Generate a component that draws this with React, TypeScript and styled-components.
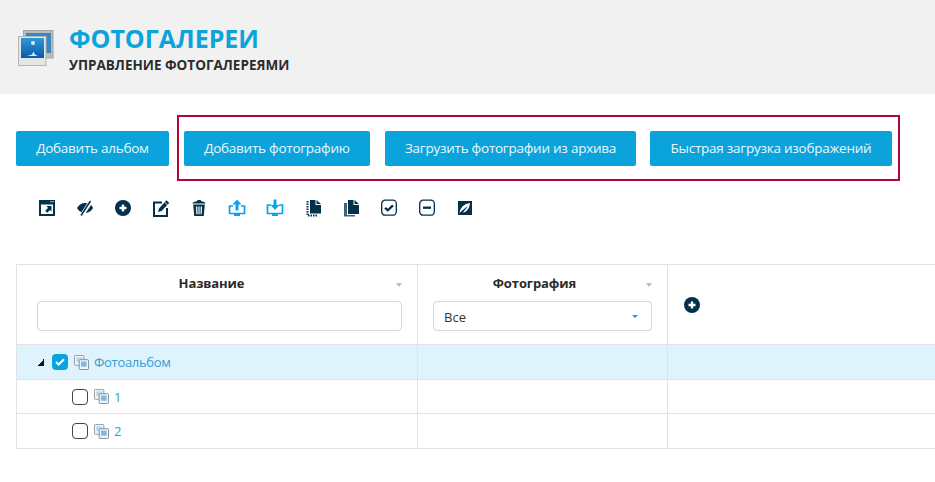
import React from "react";
import styled, { createGlobalStyle } from "styled-components";

const Global = createGlobalStyle`
  html, body { margin: 0; padding: 0; background: #fff; overflow: hidden; }
  body { font-family: "Open Sans", "Noto Sans", sans-serif; color: #333; }
  * { box-sizing: border-box; }
`;

const Page = styled.div`width: 935px; height: 482px; overflow: hidden; display: flex; flex-direction: column;`;
const Header = styled.header`height: 94px; background: #f1f1f1; display: flex; align-items: flex-start; padding: 23px 0 0 18px; gap: 15px;`;
const HeaderIcon = styled.svg`width: 36px; height: 36px; margin-top: 7px; flex: none;`;
const Titles = styled.div`display: flex; flex-direction: column;`;
const Title = styled.h1`margin: 0; font-size: 25px; line-height: 30px; font-weight: 700; color: #0ba3dc;`;
const Subtitle = styled.h2`margin: 2px 0 0; font-size: 13.5px; line-height: 20px; font-weight: 700; color: #2b2b2b;`;

const ActionRow = styled.div`display: flex; align-items: center; margin: 21px 0 0 16px;`;
const ActionBtn = styled.button<{ $w: number; $tight?: boolean }>`
  height: 35px; background: #0ba3dc; color: #eaf8fe; border: none; border-radius: 2px;
  font: 400 13.5px "Open Sans", sans-serif; letter-spacing: -0.25px; padding: 0; flex: none;
  width: ${p => p.$w}px; margin-left: ${p => (p.$tight ? "-1px" : "0")};
`;
const Framed = styled.div`
  display: flex; align-items: center; margin-left: 8px; width: 723px; height: 66px;
  border: 2px solid #b0063a; padding-left: 5px; gap: 15px;
`;

const Toolbar = styled.div`display: flex; margin: 18px 0 0 38px; height: 18px;`;
const ToolIcon = styled.svg<{ $blue?: boolean }>`width: 18px; height: 18px; flex: none; margin-right: 20px; color: ${p => (p.$blue ? "#0ba3ee" : "#03304a")};`;

const Table = styled.div`
  margin: 47px 0 0 16px; width: 1000px; display: grid;
  grid-template-columns: 401px 250px 1fr;
  border-top: 1px solid #e2e2e2; border-left: 1px solid #e2e2e2;
`;
const HeadCell = styled.div`
  height: 79px; border-right: 1px solid #e2e2e2; padding: 9px 15px 0 20px; position: relative;
  display: flex; flex-direction: column; align-items: stretch; gap: 9px;
`;
const HeadLabel = styled.div<{ $shift: number }>`font-size: 13px; line-height: 18px; font-weight: 700; color: #2b2b2b; text-align: center; padding-right: ${p => p.$shift}px; letter-spacing: -0.1px;`;
const SortMark = styled.span`
  position: absolute; right: 15px; top: 18px; width: 0; height: 0;
  border-left: 3px solid transparent; border-right: 3px solid transparent; border-top: 4px solid #bdbdbd;
`;
const FilterInput = styled.input`height: 30px; border: 1px solid #d6d6d6; border-radius: 4px; width: 365px; background: #fff; padding: 0;`;
const Select = styled.div`
  height: 30px; width: 219px; border: 1px solid #d6d6d6; border-radius: 4px; display: flex; align-items: center;
  justify-content: space-between; padding: 1px 13px 0 10px; font-size: 13px; color: #333; margin-left: -5px;
`;
const Caret = styled.span`width: 0; height: 0; border-left: 3px solid transparent; border-right: 3px solid transparent; border-top: 3px solid #0ba3ee;`;
const AddCell = styled.div`height: 79px; display: flex; align-items: center; padding-left: 16px; border-right: 1px solid #e2e2e2;`;
const AddIcon = styled.svg`width: 16px; height: 16px; color: #03304a;`;

const Cell = styled.div<{ $h: number; $active?: boolean; $indent?: number }>`
  height: ${p => p.$h}px; border-top: 1px solid #e2e2e2; border-right: 1px solid #e2e2e2;
  background: ${p => (p.$active ? "#dff3fc" : "#fff")}; display: flex; align-items: center;
  padding-left: ${p => p.$indent || 0}px;
`;
const Expander = styled.span`width: 7px; height: 7px; background: linear-gradient(135deg, transparent 50%, #111 50%); margin-right: 8px; margin-top: 1px;`;
const Check = styled.span<{ $on?: boolean }>`
  width: 16px; height: 16px; border-radius: 4px; flex: none; display: flex; align-items: center; justify-content: center;
  border: ${p => (p.$on ? "none" : "1.5px solid #3a4654")}; background: ${p => (p.$on ? "#0ba3dc" : "#fff")};
`;
const AlbumIcon = styled.svg`width: 15px; height: 15px; margin: 0 5px 0 6px; flex: none;`;
const NodeLink = styled.span`font-size: 13px; letter-spacing: -0.3px; color: #2f9fd8;`;
const Bottom = styled.div`border-top: 1px solid #e2e2e2; width: 1000px; margin-left: 16px;`;

const Plus = () => (
  <AddIcon viewBox="0 0 16 16">
    <circle cx="8" cy="8" r="8" fill="currentColor" />
    <path d="M8 4.500v7M4.500 8h7" stroke="#fff" strokeWidth="2.400" />
  </AddIcon>
);

const Album = () => (
  <AlbumIcon viewBox="0 0 16 16">
    <rect x="0.500" y="0.500" width="10" height="10.500" rx="1" fill="#f1f4f6" stroke="#8e9aa2" />
    <rect x="2.500" y="2.500" width="6" height="5" fill="#b3d8f2" />
    <rect x="5.500" y="5" width="10" height="10.500" rx="1" fill="#f1f4f6" stroke="#7f8b94" />
    <rect x="7.500" y="7" width="6" height="5.500" fill="#7db9e8" />
  </AlbumIcon>
);

const tools: { blue?: boolean; d: React.ReactNode }[] = [
  { d: <><path fillRule="evenodd" clipRule="evenodd" fill="currentColor" d="M1 1h16v16H1zM3 5.500V15h12V5.500z" /><path fill="#fff" d="M12.500 2.200h1.200v1h-1.200zM14.500 2.200h1.200v1h-1.200z" /><path fill="currentColor" d="M13.500 7v5.500L12 11l-2.800 2.800-2-2L10 9 8.500 7z" /></> },
  { d: <><path fill="currentColor" d="M1 9C3 5.500 6 4 9 4c1.300 0 2.500.3 3.500.8L6.800 13.500C4.300 13 2.300 11.500 1 9zM17 9c-1.500 3-4.200 4.700-7.300 5l5.300-8c.8.800 1.500 1.800 2 3z" /><path stroke="#fff" strokeWidth="3" d="M14.500 2L5 16.500" /><path stroke="currentColor" strokeWidth="1.500" d="M14.500 2L5 16.500" /></> },
  { d: <><circle cx="9" cy="9" r="8" fill="currentColor" /><path d="M9 5.500v7M5.500 9h7" stroke="#fff" strokeWidth="2.400" /></> },
  { d: <><path fill="none" stroke="currentColor" strokeWidth="2" d="M10 3.500H2v13.500h13V9" /><path fill="currentColor" d="M6 13l1-3.500L14.500 1.200 17.200 4 9.500 12z" /><path stroke="#fff" strokeWidth="1" d="M13 3.500l2.300 2.300" /></> },
  { d: <><path fill="currentColor" d="M2.500 4.500C2.500 3 5.500 2.400 7 2.200L7.600 1h3l.6 1.200C13 2.400 15.500 3 15.500 4.500z" /><path fill="currentColor" fillRule="evenodd" d="M3.200 5.500h11.600L13.800 17H4.200zM6 7.500l.3 7.800h1.200L7.300 7.500zm2.400 0v7.800h1.200V7.500zm2.300 0l-.2 7.800h1.200L12 7.500z" /></> },
  { blue: true, d: <><path fill="currentColor" d="M9 .5l4.500 5H10.500v6h-3v-6H4.500z" /><path fill="none" stroke="currentColor" strokeWidth="1.700" d="M5 7H1.500v7.500h15V7H13" /><path fill="currentColor" d="M6 14.500h6V17H6z" /></> },
  { blue: true, d: <><path fill="currentColor" d="M7.500 .5h3v5.500h3L9 11 4.500 6h3z" /><path fill="none" stroke="currentColor" strokeWidth="1.700" d="M5 6H1.500v8.500h15V6H13" /><path fill="currentColor" d="M6 14.500h6V17H6z" /></> },
  { d: <><path fill="currentColor" d="M6 1h5.500v5h5.500v8.500H6zM12.500 1L17 5h-4.500z" /><path stroke="currentColor" strokeWidth="2" strokeDasharray="1.500 1" d="M3.500 2v14.500H14" fill="none" /></> },
  { d: <><path fill="currentColor" d="M6 1h5.500v5h5.500v9H6zM12.500 1L17 5h-4.500z" /><path fill="currentColor" opacity=".75" d="M2 4h3v12h8v1.500H2z" /></> },
  { d: <><rect x="1.700" y="1.200" width="14.600" height="15" rx="3.500" fill="none" stroke="currentColor" strokeWidth="1.300" /><path fill="none" stroke="currentColor" strokeWidth="2.300" d="M5 8.800l2.800 2.500L13 6.300" /></> },
  { d: <><rect x="1.700" y="1.200" width="14.600" height="15" rx="3.500" fill="none" stroke="currentColor" strokeWidth="1.300" /><path stroke="currentColor" strokeWidth="2.300" d="M5 8.700h8" /></> },
  { d: <><rect x="2" y="2" width="14" height="14" fill="currentColor" /><path fill="#fff" d="M3.500 14C4 9 7.500 5 14 4c-.5 6-3.500 9-7 9.500L12 7c-3 2-5.500 4-8.500 7z" /></> },
];

export default function App() {
  return (
    <Page>
      <Global />
      <Header>
        <HeaderIcon viewBox="0 0 36 36">
          <defs>
            <linearGradient id="sea" x1="0" y1="0" x2="0" y2="1">
              <stop offset="0" stopColor="#2f97dc" />
              <stop offset="1" stopColor="#0a5aa6" />
            </linearGradient>
          </defs>
          <rect x="5.500" y="0.500" width="29.500" height="27.500" fill="#b9bbbc" stroke="#a2a4a5" />
          <rect x="8" y="3" width="25" height="20" fill="#3c86bf" />
          <rect x="0.500" y="6.500" width="27.500" height="29" fill="#e4e5e5" stroke="#b5b6b6" />
          <rect x="3" y="8" width="23" height="20" fill="url(#sea)" />
          <circle cx="15" cy="13" r="2" fill="#d7effc" />
          <path d="M9 26h11l-3-1.500-1.500-3-1.500 3z" fill="#cfe9f7" />
        </HeaderIcon>
        <Titles>
          <Title>ФОТОГАЛЕРЕИ</Title>
          <Subtitle>УПРАВЛЕНИЕ ФОТОГАЛЕРЕЯМИ</Subtitle>
        </Titles>
      </Header>
      <ActionRow>
        <ActionBtn $w={153}>Добавить альбом</ActionBtn>
        <Framed>
          <ActionBtn $w={186}>Добавить фотографию</ActionBtn>
          <ActionBtn $w={251}>Загрузить фотографии из архива</ActionBtn>
          <ActionBtn $w={242} $tight>Быстрая загрузка изображений</ActionBtn>
        </Framed>
      </ActionRow>
      <Toolbar>
        {tools.map((t, i) => (
          <ToolIcon key={i} viewBox="0 0 18 18" $blue={t.blue}>{t.d}</ToolIcon>
        ))}
      </Toolbar>
      <Table>
        <HeadCell>
          <HeadLabel $shift={16}>Название</HeadLabel>
          <SortMark />
          <FilterInput />
        </HeadCell>
        <HeadCell>
          <HeadLabel $shift={21}>Фотография</HeadLabel>
          <SortMark />
          <Select>Все<Caret /></Select>
        </HeadCell>
        <AddCell><Plus /></AddCell>

        <Cell $h={35} $active $indent={20}>
          <Expander />
          <Check $on>
            <svg width="10" height="8" viewBox="0 0 10 8"><path d="M1 4l2.700 2.500L9 1.200" fill="none" stroke="#fff" strokeWidth="2" /></svg>
          </Check>
          <Album />
          <NodeLink>Фотоальбом</NodeLink>
        </Cell>
        <Cell $h={35} $active />
        <Cell $h={35} $active />

        <Cell $h={34} $indent={55}><Check /><Album /><NodeLink>1</NodeLink></Cell>
        <Cell $h={34} />
        <Cell $h={34} />

        <Cell $h={35} $indent={55}><Check /><Album /><NodeLink>2</NodeLink></Cell>
        <Cell $h={35} />
        <Cell $h={35} />
      </Table>
      <Bottom />
    </Page>
  );
}
